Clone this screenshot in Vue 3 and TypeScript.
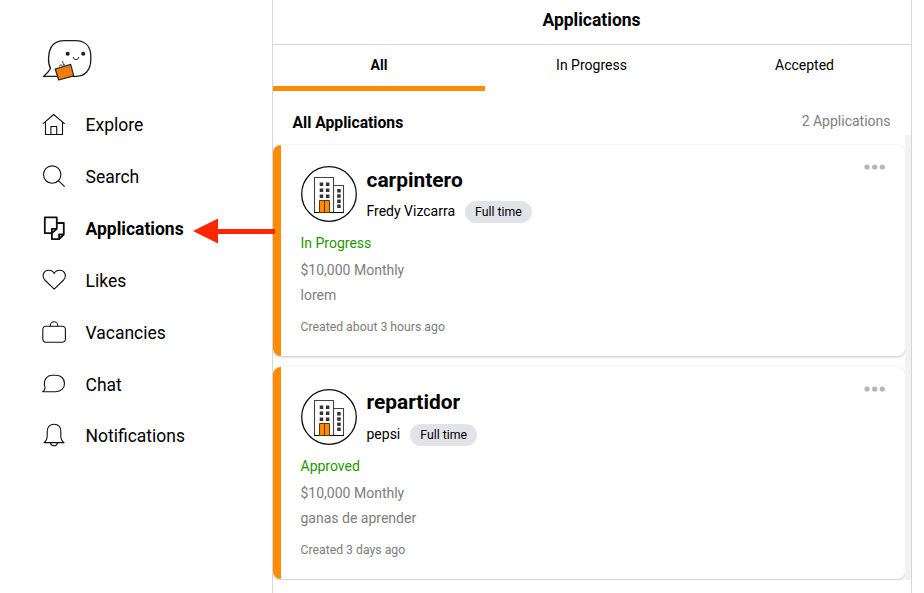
<script setup lang="ts">
import { ref } from 'vue'

interface NavItem {
  label: string
  paths: string[]
  bold?: boolean
}

interface Application {
  id: number
  title: string
  company: string
  schedule: string
  status: string
  salary: string
  description: string
  created: string
}

const navItems: NavItem[] = [
  {
    label: 'Explore',
    paths: ['M.8 10.8 11.7 1.5l11 9.3', 'M3.5 9v12.5h17V9', 'M8.9 21.5v-8h5.8v8'],
  },
  {
    label: 'Search',
    paths: ['M18.9 9.6a8.7 8.7 0 1 1-17.4 0 8.7 8.7 0 0 1 17.4 0Z', 'm16.3 15.7 6.4 6'],
  },
  {
    label: 'Applications',
    bold: true,
    paths: [
      'M9.9 16.2H2.8V.4h12v11.4H9.9v4.4l4.9-4.4',
      'M14.8 6h7v11.5l-4.7 4.7H9.9v-6',
      'M17.1 22.2v-4.7h4.7',
    ],
  },
  {
    label: 'Likes',
    paths: ['M12.2 20.2 2.8 11C-.8 6.8 1.8 1.3 6.6 1.3c2.6 0 4.5 1 5.6 3.1 1.1-2.1 3-3.1 5.6-3.1 4.8 0 7.4 5.5 3.8 9.7Z'],
  },
  {
    label: 'Vacancies',
    paths: ['M3.8 5.3h16.6a3 3 0 0 1 3 3v10a3 3 0 0 1-3 3H3.8a3 3 0 0 1-3-3v-10a3 3 0 0 1 3-3Z', 'M8.3 5.3V4.5a3.7 3.7 0 0 1 7.4 0v.8'],
  },
  {
    label: 'Chat',
    paths: ['M.7 18.7c1.7-1.3 2.5-2.7 2.3-4.3-1-3.3-.8-6.7 1-9 1.5-2.2 3.7-3.2 6.5-3.2h3.2c5.200 0 8.800 3.400 8.800 8.200 0 5-3.600 8.300-8.800 8.300Z'],
  },
  {
    label: 'Notifications',
    paths: [
      'M2 18.6c2.3-1.6 3.2-3.7 3.2-6.8V7.6C5.2 3 8 .3 12 .3s6.8 2.7 6.8 7.3v4.2c0 3.1.9 5.2 3.2 6.8Z',
      'M8.5 18.8c.4 2 1.7 3 3.500 3s3.100-1 3.500-3',
    ],
  },
]

const tabs = ['All', 'In Progress', 'Accepted']
const activeTab = ref('All')

const applications: Application[] = [
  {
    id: 1,
    title: 'carpintero',
    company: 'Fredy Vizcarra',
    schedule: 'Full time',
    status: 'In Progress',
    salary: '$10,000 Monthly',
    description: 'lorem',
    created: 'Created about 3 hours ago',
  },
  {
    id: 2,
    title: 'repartidor',
    company: 'pepsi',
    schedule: 'Full time',
    status: 'Approved',
    salary: '$10,000 Monthly',
    description: 'ganas de aprender',
    created: 'Created 3 days ago',
  },
]

const towerWindows = [5.5, 11.5, 17.5]
const annexWindows = [12, 17.3, 22.5, 27.5]
</script>

<template>
  <div class="page">
    <aside class="sidebar">
      <svg class="logo" width="50" height="42" viewBox="0 0 50 42">
        <path d="M1.400 37.400c3.300-2.600 5.700-5.200 7.100-7.900-1.600-3.200-2.200-7-1.900-11.300C7.200 7.500 12.500 1.600 22.500 1.600h11c9.500 0 15.300 5.500 15.300 16v3c0 10.600-5.800 16.800-15.500 16.800Z" fill="#fff" stroke="#1c1c28" stroke-width="1.300" stroke-linejoin="round" />
        <path d="m17.500 27.500 1-1.800 2 1.200M20.500 22l1.200 4.500 1.500-1.400" fill="none" stroke="#1c1c28" stroke-width=".8" />
        <path d="m13.200 30 15.500-4.600 3 11.500-15 4.100Z" fill="#ee7c0e" stroke="#2a2320" stroke-width="1.200" stroke-linejoin="round" />
        <circle cx="25.700" cy="14.700" r="2" fill="#1c1c28" />
        <circle cx="41.200" cy="14.700" r="2" fill="#1c1c28" />
        <path d="M31.200 18c.3 3.400 5.300 3.400 5.700 0" fill="none" stroke="#1c1c28" stroke-width="1" />
      </svg>
      <nav class="nav">
        <a v-for="item in navItems" :key="item.label" class="nav-item" :class="{ active: item.bold }">
          <svg class="nav-icon" width="24" height="24" viewBox="0 0 24 24">
            <path v-for="d in item.paths" :key="d" :d="d" />
          </svg>
          <span>{{ item.label }}</span>
        </a>
      </nav>
      <svg class="arrow" width="82" height="26" viewBox="0 0 82 26">
        <path d="M0 13 25 .5V11h57v5H25v9.500Z" fill="#ff2600" />
      </svg>
    </aside>

    <main class="panel">
      <h1 class="panel-title">Applications</h1>
      <div class="tabs">
        <button
          v-for="tab in tabs"
          :key="tab"
          class="tab"
          :class="{ selected: tab === activeTab }"
          @click="activeTab = tab"
        >
          {{ tab }}
        </button>
      </div>
      <div class="summary">
        <h2 class="summary-title">All Applications</h2>
        <span class="summary-count">{{ applications.length }} Applications</span>
      </div>
      <div class="scroller">
        <div class="list">
          <article v-for="app in applications" :key="app.id" class="card">
            <div class="card-head">
              <svg class="avatar" width="56" height="56" viewBox="0 0 56 56">
                <circle cx="28" cy="28" r="27.300" fill="#fff" stroke="#111" stroke-width="1.300" />
                <g transform="translate(13 11)">
                  <path d="M.5 35.500V.5h19v35M19.500 8.500h10v27" fill="none" stroke="#444" stroke-width="1.100" />
                  <path d="M0 35.500h30" stroke="#111" stroke-width="1.100" />
                  <g fill="#333">
                    <template v-for="y in towerWindows" :key="y">
                      <rect x="5.700" :y="y" width="3.500" height="3.500" />
                      <rect x="11.900" :y="y" width="3.500" height="3.500" />
                    </template>
                    <rect v-for="y in annexWindows" :key="y" x="23.200" :y="y" width="3.500" height="3.500" />
                  </g>
                  <path d="M5.500 35.500V23.500h10v12ZM10.500 23.500v12" fill="#ff8c00" stroke="#5a3508" stroke-width="1" />
                </g>
              </svg>
              <div class="heading">
                <h3 class="job">{{ app.title }}</h3>
                <div class="company-row">
                  <span class="company">{{ app.company }}</span>
                  <span class="pill">{{ app.schedule }}</span>
                </div>
              </div>
              <svg class="more" width="22" height="6" viewBox="0 0 22 6">
                <circle cx="3" cy="3" r="2.600" />
                <circle cx="10.700" cy="3" r="2.600" />
                <circle cx="18.300" cy="3" r="2.600" />
              </svg>
            </div>
            <p class="status">{{ app.status }}</p>
            <p class="detail">{{ app.salary }}</p>
            <p class="detail">{{ app.description }}</p>
            <p class="created">{{ app.created }}</p>
          </article>
        </div>
        <div class="track"></div>
      </div>
    </main>
  </div>
</template>

<style>
body {
  margin: 0;
  background: #fff;
}
</style>

<style scoped>
.page {
  display: flex;
  width: 924px;
  height: 593px;
  overflow: hidden;
  box-sizing: border-box;
  font-family: Roboto, 'Liberation Sans', sans-serif;
  color: #000;
}

h1,
h2,
h3,
p {
  margin: 0;
}

.sidebar {
  position: relative;
  width: 272px;
  flex: none;
  box-sizing: border-box;
  padding: 39px 0 0 42px;
}

.logo {
  display: block;
}

.nav {
  display: flex;
  flex-direction: column;
  padding-top: 18px;
}

.nav-item {
  display: flex;
  align-items: center;
  gap: 19.5px;
  height: 52px;
  font-size: 17.5px;
}

.nav-item:last-child {
  height: 50px;
}

.nav-item.active {
  font-weight: 700;
}

.nav-icon {
  flex: none;
  overflow: visible;
  fill: none;
  stroke: #111;
  stroke-width: 1.1;
  stroke-linejoin: round;
}

.active .nav-icon {
  stroke-width: 1.8;
}

.arrow {
  position: absolute;
  left: 193px;
  top: 218px;
  z-index: 2;
}

.panel {
  width: 638px;
  flex: none;
  border-left: 1px solid #d6d6d6;
  border-right: 1px solid #d6d6d6;
}

.panel-title {
  height: 44px;
  padding-right: 1px;
  border-bottom: 1px solid #d6d6d6;
  font-size: 17.5px;
  font-weight: 700;
  line-height: 40px;
  text-align: center;
}

.tabs {
  display: grid;
  grid-template-columns: 212px 213px 213px;
  height: 46px;
}

.tab {
  padding: 0 0 1px;
  border: 0;
  border-bottom: 5px solid transparent;
  background: none;
  font: 400 14px Roboto, 'Liberation Sans', sans-serif;
  color: #000;
}

.tab.selected {
  border-bottom-color: #ff8c00;
  font-weight: 700;
}

.summary {
  display: flex;
  justify-content: space-between;
  height: 44px;
  padding: 0 20.5px 0 19.5px;
}

.summary-title {
  font-size: 15.7px;
  font-weight: 700;
  line-height: 63px;
}

.summary-count {
  font-size: 14px;
  line-height: 61px;
  color: #808080;
}

.scroller {
  display: flex;
  height: 445px;
}

.list {
  flex: 1;
  display: flex;
  flex-direction: column;
  gap: 11px;
  padding-top: 10px;
  overflow: hidden;
}

.card {
  height: 211px;
  flex: none;
  box-sizing: border-box;
  padding: 21px 19px 0 19.5px;
  border-left: 8px solid #ff8c00;
  border-radius: 8px;
  background: #fff;
  box-shadow: 0 1px 3px rgba(0, 0, 0, 0.25);
}

.card + .card {
  height: 212px;
}

.card-head {
  display: flex;
  height: 65px;
}

.card + .card .card-head {
  height: 66px;
}

.avatar {
  flex: none;
  margin-left: 0.5px;
}

.card + .card .avatar {
  margin-top: 1px;
}

.heading {
  flex: 1;
  padding-left: 9.5px;
}

.job {
  font-size: 20.9px;
  font-weight: 700;
  line-height: 28px;
}

.company-row {
  display: flex;
  align-items: center;
  gap: 10px;
  padding-top: 7px;
  font-size: 14px;
}

.card + .card .company-row {
  padding-top: 8px;
}

.company {
  padding-bottom: 2px;
}

.pill {
  height: 22px;
  padding: 0 10px;
  border-radius: 11px;
  background: #e2e2e9;
  font-size: 12.3px;
  line-height: 22px;
}

.more {
  flex: none;
  margin-top: -2px;
  fill: #b5b5b5;
}

.status {
  font-size: 14px;
  line-height: 25px;
  color: #1f9600;
}

.detail {
  font-size: 14px;
  line-height: 25px;
  color: #7d7d7d;
}

.status + .detail {
  margin-top: 2px;
}

.created {
  margin-top: 7px;
  font-size: 12.25px;
  line-height: 24px;
  color: #7d7d7d;
}

.track {
  width: 6px;
  flex: none;
  background: #f2f2f2;
}
</style>
